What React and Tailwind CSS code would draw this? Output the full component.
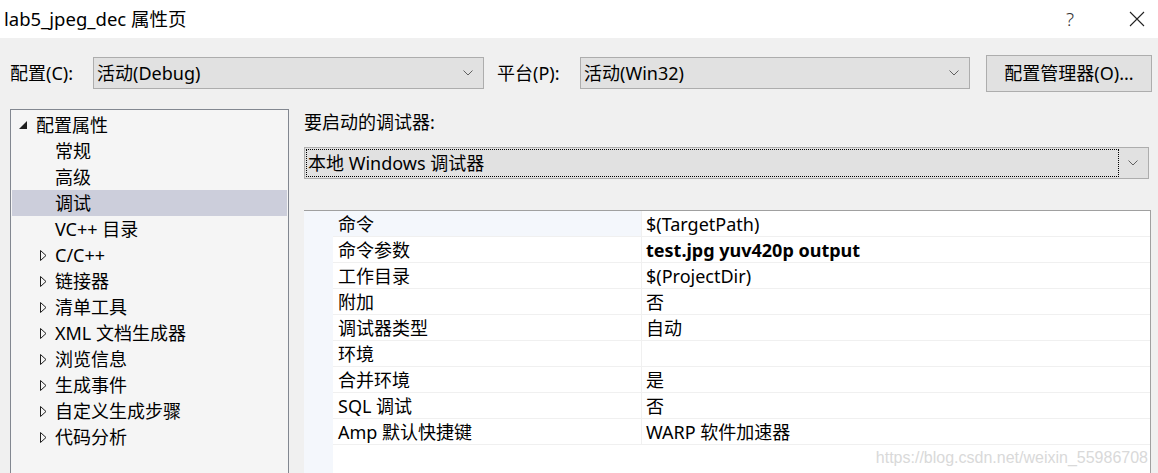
import React from 'react';

const FONT = { fontFamily: '"Noto Sans", "Noto Sans CJK SC", sans-serif' };

const Chevron = ({ className }) => (
    <svg width="10" height="6" viewBox="0 0 10 6" className={className}>
        <path d="M0.5 0.5 L5 5 L9.5 0.5" fill="none" stroke="#606060" strokeWidth="1" />
    </svg>
);

const Select = ({ value, width }) => (
    <div className={`${width} h-[32px] bg-[#e1e1e1] border border-[#adadad] flex items-center pl-[3px] pr-[10px]`}>
        <span className="flex-1 text-[18px] leading-none text-black">{value}</span>
        <Chevron />
    </div>
);

const ExpandedArrow = () => (
    <svg width="9" height="9" viewBox="0 0 9 9">
        <polygon points="8,0 8,8 0,8" fill="#1e1e1e" />
    </svg>
);

const CollapsedArrow = () => (
    <svg width="7" height="11" viewBox="0 0 7 11">
        <polygon points="0.5,0.5 6,5.5 0.5,10.5" fill="none" stroke="#1e1e1e" strokeWidth="1" />
    </svg>
);

const treeItems = [
    { label: '常规', kind: 'leaf' },
    { label: '高级', kind: 'leaf' },
    { label: '调试', kind: 'leaf', selected: true },
    { label: 'VC++ 目录', kind: 'leaf' },
    { label: 'C/C++', kind: 'group' },
    { label: '链接器', kind: 'group' },
    { label: '清单工具', kind: 'group' },
    { label: 'XML 文档生成器', kind: 'group' },
    { label: '浏览信息', kind: 'group' },
    { label: '生成事件', kind: 'group' },
    { label: '自定义生成步骤', kind: 'group' },
    { label: '代码分析', kind: 'group' },
];

const props = [
    ['命令', '$(TargetPath)'],
    ['命令参数', 'test.jpg yuv420p output', true],
    ['工作目录', '$(ProjectDir)'],
    ['附加', '否'],
    ['调试器类型', '自动'],
    ['环境', ''],
    ['合并环境', '是'],
    ['SQL 调试', '否'],
    ['Amp 默认快捷键', 'WARP 软件加速器'],
];

export default function App() {
    return (
        <div style={FONT} className="relative w-[1158px] h-[473px] overflow-hidden bg-[#f0f0f0] flex flex-col text-black">
            {/* Title bar */}
            <div className="h-[38px] bg-white flex items-center pl-[4px] shrink-0">
                <span className="text-[18.5px] leading-none flex-1">lab5_jpeg_dec 属性页</span>
                <span className="text-[19px] font-light leading-none text-[#333] mr-[55px]">?</span>
                <svg width="16" height="16" viewBox="0 0 16 16" className="mr-[13px]">
                    <path d="M1 1 L15 15 M15 1 L1 15" stroke="#222" strokeWidth="1.1" />
                </svg>
            </div>

            {/* Config row */}
            <div className="h-[38px] mt-[16px] flex items-center shrink-0">
                <span className="w-[93px] pl-[10px] text-[18px] leading-none">配置(C):</span>
                <Select value="活动(Debug)" width="w-[391px]" />
                <span className="w-[83px] ml-[13px] text-[18px] leading-none">平台(P):</span>
                <Select value="活动(Win32)" width="w-[390px]" />
                <button className="ml-[16px] w-[166px] h-[37px] bg-[#e1e1e1] border border-[#adadad] text-[18px] leading-none">
                    配置管理器(O)...
                </button>
            </div>

            {/* Main */}
            <div className="flex-1 flex mt-[17px] min-h-0">
                {/* Tree */}
                <div className="ml-[10px] w-[279px] border border-b-0 border-[#828790] bg-[#f5f5f5] pt-[2px] px-[1px]">
                    <div className="h-[26px] flex items-center">
                        <span className="w-[24px] flex justify-end pr-[8px]"><ExpandedArrow /></span>
                        <span className="text-[18px] leading-none">配置属性</span>
                    </div>
                    {treeItems.map((it) => (
                        <div
                            key={it.label}
                            className={`h-[26px] flex items-center ${it.selected ? 'bg-[#cccedb]' : ''}`}
                        >
                            <span className="w-[43px] flex justify-end pr-[8px]">
                                {it.kind === 'group' && <CollapsedArrow />}
                            </span>
                            <span className="text-[18px] leading-none">{it.label}</span>
                        </div>
                    ))}
                </div>

                {/* Right side */}
                <div className="ml-[15px] flex flex-col w-[847px]">
                    <div className="h-[26px] flex items-center">
                        <span className="text-[18px] leading-none">要启动的调试器:</span>
                    </div>
                    <div className="mt-[12px] w-[845px] h-[32px] bg-[#e1e1e1] border border-[#adadad] flex items-center p-[1px]">
                        <div className="flex-1 h-full border border-dotted border-black flex items-center pl-[1px]">
                            <span className="text-[18px] leading-none">本地 Windows 调试器</span>
                        </div>
                        <Chevron className="mx-[9px]" />
                    </div>

                    {/* Property grid */}
                    <div className="mt-[31px] flex-1 flex border-t border-r border-[#a0a0a0] bg-white">
                        <div className="w-[29px] bg-[#f4f7fc] shrink-0" />
                        <div className="flex-1 flex flex-col">
                            {props.map(([name, value, bold], i) => (
                                <div key={name} className="h-[26px] flex border-b border-[#f0f0f0]">
                                    <div className={`w-[309px] shrink-0 flex items-center pl-[5px] border-r border-[#f0f0f0] ${i === 0 ? 'bg-[#f4f7fc]' : ''}`}>
                                        <span className="text-[18px] leading-none">{name}</span>
                                    </div>
                                    <div className="flex-1 flex items-center pl-[4px]">
                                        <span className={`text-[18px] leading-none ${bold ? 'font-bold' : ''}`}>{value}</span>
                                    </div>
                                </div>
                            ))}
                        </div>
                    </div>
                </div>
            </div>

            {/* Watermark */}
            <span className="absolute right-[10px] bottom-[7px] text-[16px] leading-none text-[#d9d9d9]" style={{ fontFamily: '"Liberation Sans", sans-serif' }}>
                https://blog.csdn.net/weixin_55986708
            </span>
        </div>
    );
}
